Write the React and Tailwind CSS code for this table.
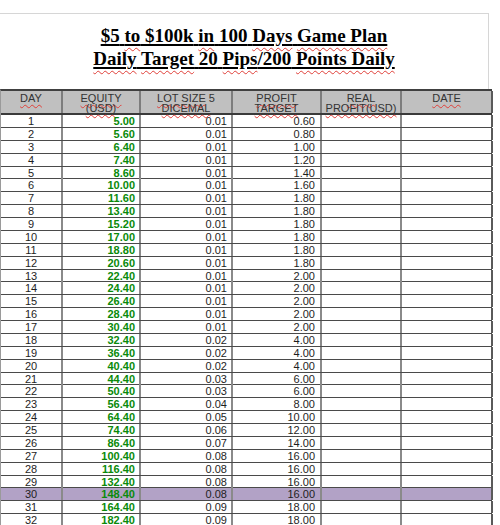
const ROWS = [
  ['5.00', '0.01', '0.60'],
  ['5.60', '0.01', '0.80'],
  ['6.40', '0.01', '1.00'],
  ['7.40', '0.01', '1.20'],
  ['8.60', '0.01', '1.40'],
  ['10.00', '0.01', '1.60'],
  ['11.60', '0.01', '1.80'],
  ['13.40', '0.01', '1.80'],
  ['15.20', '0.01', '1.80'],
  ['17.00', '0.01', '1.80'],
  ['18.80', '0.01', '1.80'],
  ['20.60', '0.01', '1.80'],
  ['22.40', '0.01', '2.00'],
  ['24.40', '0.01', '2.00'],
  ['26.40', '0.01', '2.00'],
  ['28.40', '0.01', '2.00'],
  ['30.40', '0.01', '2.00'],
  ['32.40', '0.02', '4.00'],
  ['36.40', '0.02', '4.00'],
  ['40.40', '0.02', '4.00'],
  ['44.40', '0.03', '6.00'],
  ['50.40', '0.03', '6.00'],
  ['56.40', '0.04', '8.00'],
  ['64.40', '0.05', '10.00'],
  ['74.40', '0.06', '12.00'],
  ['86.40', '0.07', '14.00'],
  ['100.40', '0.08', '16.00'],
  ['116.40', '0.08', '16.00'],
  ['132.40', '0.08', '16.00'],
  ['148.40', '0.08', '16.00'],
  ['164.40', '0.09', '18.00'],
  ['182.40', '0.09', '18.00'],
];

const GRID = 'grid grid-cols-[62px_78px_92px_89px_80px_91px]';

// spell-check squiggle under a word
function Wavy({ children }) {
  return (
    <span className="underline decoration-wavy decoration-[#e0403a] decoration-1 underline-offset-[2px]">
      {children}
    </span>
  );
}

function TitleLine({ words }) {
  return (
    <div className="underline decoration-black decoration-[1.5px] underline-offset-[2px]">
      {words.map((w, i) => (
        <span key={i}>
          {i > 0 && !w.join && ' '}
          {w.wavy ? (
            <span className="underline decoration-wavy decoration-[#e0403a] decoration-1 underline-offset-[5px]">{w.t}</span>
          ) : (
            w.t
          )}
        </span>
      ))}
    </div>
  );
}

export default function App() {
  return (
    <div className="w-[500px] h-[525px] overflow-hidden bg-white font-['Liberation_Sans',Arial,sans-serif]">
      {/* page frame with title */}
      <div className="mt-[13px] w-[489px] border-t border-r border-[#d6d6d6] pt-[10px] pb-[19px] text-center font-['Liberation_Serif','Times_New_Roman',serif] text-[19px] leading-[23px] font-bold text-black">
        <TitleLine
          words={[
            { t: '$5' },
            { t: 'to', wavy: true },
            { t: '$100k' },
            { t: 'in', wavy: true },
            { t: '100' },
            { t: 'Days', wavy: true },
            { t: 'Game Plan', wavy: true },
          ]}
        />
        <TitleLine
          words={[
            { t: 'Daily', wavy: true },
            { t: 'Target', wavy: true },
            { t: '20' },
            { t: 'Pips', wavy: true },
            { t: '/200', join: true },
            { t: 'Points Daily', wavy: true },
          ]}
        />
      </div>

      {/* table */}
      <div className="w-[492px] border-t-2 border-l border-[#404040] border-l-[#9a9a9a]">
        <div className={`${GRID} h-[24px] bg-[#c0c0c0] border-b-2 border-[#3a3a3a] text-[11px] leading-[10px] text-[#333]`}>
          <div className="border-r-2 border-[#7d7d7d] text-center pt-[2px]"><Wavy>DAY</Wavy></div>
          <div className="border-r-2 border-[#7d7d7d] text-center pt-[2px]">
            <Wavy>EQUITY</Wavy>
            <br />
            <Wavy>(USD)</Wavy>
          </div>
          <div className="border-r-2 border-[#7d7d7d] text-center pt-[2px]">
            <Wavy>LOT SIZE</Wavy> 5
            <br />
            <Wavy>DICEMAL</Wavy>
          </div>
          <div className="border-r-2 border-[#7d7d7d] text-center pt-[2px]">
            <Wavy>PROFIT</Wavy>
            <br />
            <Wavy>TARGET</Wavy>
          </div>
          <div className="border-r-2 border-[#7d7d7d] text-center pt-[2px]">
            <Wavy>REAL</Wavy>
            <br />
            <Wavy>PROFIT(USD)</Wavy>
          </div>
          <div className="border-r-2 border-[#5a5a5a] text-center pt-[2px]"><Wavy>DATE</Wavy></div>
        </div>

        {ROWS.map(([eq, lot, target], i) => (
          <div
            key={i}
            className={`${GRID} h-[12.875px] border-b border-[#4a4a4a] text-[11px] leading-[12px] text-[#1e1e1e] ${
              i === 29 ? 'bg-[#b2a2c6]' : 'bg-white'
            }`}
          >
            <div className="border-r-2 border-[#8a8a8a] text-center">{i + 1}</div>
            <div className="border-r-2 border-[#8a8a8a] text-right pr-[4px] font-bold text-[#0a8a0a]">{eq}</div>
            <div className="border-r-2 border-[#8a8a8a] text-right pr-[4px]">{lot}</div>
            <div className="border-r-2 border-[#8a8a8a] text-right pr-[5px]">{target}</div>
            <div className="border-r-2 border-[#8a8a8a]"></div>
            <div className="border-r-2 border-[#5a5a5a]"></div>
          </div>
        ))}
      </div>
    </div>
  );
}
